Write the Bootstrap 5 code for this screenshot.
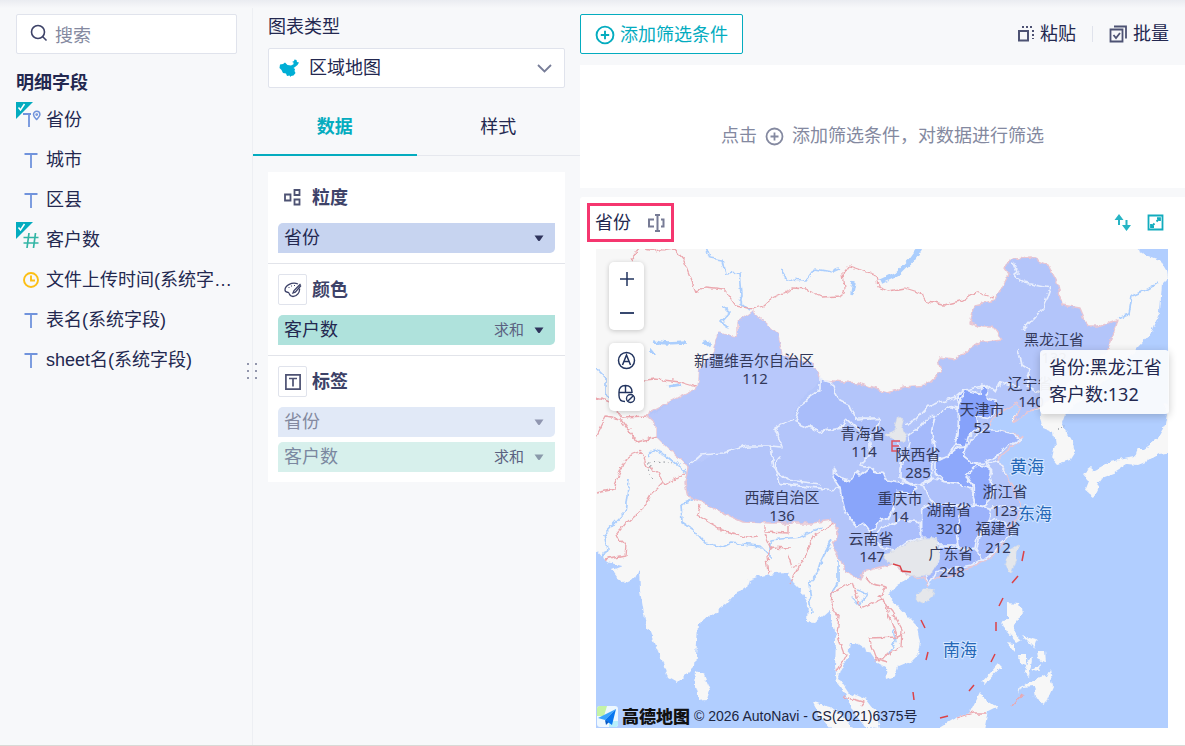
<!DOCTYPE html>
<html lang="zh-CN">
<head>
<meta charset="utf-8">
<meta name="viewport" content="width=device-width, initial-scale=1">
<title>区域地图</title>
<link href="https://cdn.jsdelivr.net/npm/bootstrap@5.3.0/dist/css/bootstrap.min.css" rel="stylesheet">
<style>
:root{--ink:#232850;--ink2:#3d4268;--mute:#8489a0;--teal:#04acbf;--line:#e0e3ec;--pane:#f7f8fa}
body{font-family:"Liberation Sans","Noto Sans CJK SC",sans-serif;font-size:18px;line-height:26px;color:var(--ink);background:var(--pane)}
button,select,input{font-family:inherit;color:inherit}
svg{display:block;flex:none}
.workbench{min-height:100vh;border-bottom:1px solid #d9d9d6}
.workbench::before{content:"";position:absolute;top:0;left:0;right:0;height:8px;background:linear-gradient(#eaecf1,#f7f8fa);z-index:2}
.fields-pane{width:253px;padding:14px 15px 14px 16px;border-right:1px solid #edeff3}
.config-pane{width:327px}
.search-box{height:40px;padding:0 13px;gap:5px;background:#fff;border:1px solid var(--line);border-radius:2px}
.search-box input{font-size:18px;border:0;outline:0;background:none;min-width:0}
.search-box input::placeholder{color:var(--mute);opacity:1}
.pane-title{font-size:18px;line-height:26px;font-weight:700;margin:16px 0 4px}
.field-row{height:40px;padding-left:6px;gap:6px}
.field-row svg{width:18px;height:18px}
.field-row .used{position:absolute;left:0;top:2px;width:17px;height:17px}
.field-row a{color:inherit;text-decoration:none;white-space:nowrap}
.grip{position:absolute;right:-6px;top:363px}
.kind-label{display:block;margin:14px 16px 8px 15px}
.kind{height:40px;margin:0 15px}
.kind select{font-size:18px;line-height:26px;height:40px;padding:0 40px;border:1px solid var(--line);border-radius:2px;background:#fff;color:var(--ink)}
.kind svg{position:absolute;top:8px;pointer-events:none}
.kind .chev{right:12px;top:12px}
.kind .region{left:10px}
.cfg-tabs{height:68px;border-bottom:1px solid #e6e8ee}
.cfg-tabs button{border:0;background:none;padding:12px 0 0;margin-bottom:-1px;border-bottom:2px solid transparent}
.cfg-tabs .active{font-weight:700;color:var(--teal);border-color:var(--teal)}
.shelves{margin:16px 15px;background:#fff}
.shelf{padding:10px}
.shelf+.shelf{border-top:1px solid #e2e4ea}
.shelf h3{font-size:18px;line-height:26px;font-weight:700;color:var(--ink2);height:31px;margin:0 0 10px;gap:5px}
.shelf-icon{width:29px;height:31px;border:1px solid transparent;border-radius:2px;background:#fff;padding:0}
.shelf-icon.boxed{border-color:var(--line)}
.pill{height:30px;border:0;border-radius:5px 0 5px 0;padding:0 11px 0 6px;gap:10px;width:100%}
.pill+.pill{margin-top:5px}
.pill small{font-size:15px;color:#5b6180}
.dim{background:#c7d4f0}.measure{background:#afe2dc}
.dim.faded{background:#e1e9f7;color:var(--mute)}
.measure.faded{background:#d7f0ec;color:#7b88a0}
.faded svg{opacity:.45}
.filter-bar{height:65px;padding:14px 16px 11px 0}
.add-filter{height:40px;padding:2px 14px 0;border:1px solid var(--teal);border-radius:2px;background:#fff;color:var(--teal);gap:5px}
.tool{border:0;background:none;padding:0;gap:5px}
.tool-rule{width:1px;height:16px;background:var(--line);margin:0 16px}
.filter-drop{height:123px;background:#fff;color:var(--mute);gap:8px;padding-top:19px;margin-bottom:9px}
.chart-card{background:#fff;border-radius:3px 0 0 0;padding:6px 17px 17px 7px}
.chart-name{height:39px;border:3px solid #f5366f;padding:0 5px;gap:16px}
.map-stage{margin:7px 0 0 9px;min-height:479px;background:#b1ceff}
.map-stage>svg{position:absolute;inset:0;width:100%;height:100%}
.map-stage text{font-family:"Noto Sans","Noto Sans CJK SC",sans-serif}
.prov{font-size:15px;fill:#33395a;text-anchor:middle}
.sea{font-size:17px;fill:#2468b8;text-anchor:middle;stroke:#d7e7ff;stroke-width:2px;paint-order:stroke}
.map-ctl{position:absolute;left:13px;width:35px;height:68px;background:#fff;border-radius:5px;box-shadow:0 1px 5px #0003}
.map-ctl button{display:flex;align-items:center;justify-content:center;border:0;background:none;padding:0;width:35px;height:34px}
.map-tip{position:absolute;right:-1px;top:101px;padding:4px 9px 5px;background:#fafbfdf2;border-radius:4px;box-shadow:0 2px 8px #0003;font-family:"Noto Sans","Noto Sans CJK SC",sans-serif;font-size:18px;line-height:27px;width:129px;height:64px;white-space:nowrap}
.map-credit{position:absolute;left:1px;bottom:0;font-size:14px;line-height:24px;gap:4px;color:#20263f}
.map-credit b{font-family:"Noto Sans CJK SC",sans-serif;font-size:17px;font-weight:900;line-height:24px;color:#111}
</style>
</head>
<body>
<svg width="0" height="0" class="position-absolute" aria-hidden="true">
<symbol id="i-text" viewBox="0 0 18 18"><path d="M2.500 3h13M9 3v14" fill="none" stroke="#7093dc" stroke-width="1.800"/></symbol>
<symbol id="i-used" viewBox="0 0 17 17"><path d="M0 0h17L0 17z" fill="#04acbf"/><path d="M2.500 5.500l2 2.500 4-6" fill="none" stroke="#fff" stroke-width="1.500"/></symbol>
<symbol id="i-caret" viewBox="0 0 10 7"><path d="M0.500.500h9L6 5.500q-1 1-2 0z" fill="#2f345c"/></symbol>
<symbol id="i-plus" viewBox="0 0 19 19"><circle cx="9.500" cy="9.500" r="8" fill="none" stroke="currentColor" stroke-width="1.800"/><path d="M9.500 5.500v8M5.500 9.500h8" stroke="currentColor" stroke-width="1.800"/></symbol>
</svg>
<div class="workbench d-flex position-relative">
<aside class="fields-pane position-relative flex-shrink-0">
  <label class="search-box d-flex align-items-center">
    <svg width="18" height="20" viewBox="0 0 18 20" fill="none" stroke="#3d4268" stroke-width="1.600"><circle cx="8" cy="8" r="6.500"/><path d="M12.500 12.500l4 4"/></svg>
    <input class="w-100 pt-1" type="search" placeholder="搜索" aria-label="搜索">
  </label>
  <h2 class="pane-title">明细字段</h2>
  <ul class="list-unstyled m-0">
    <li class="field-row d-flex align-items-center position-relative"><svg class="used"><use href="#i-used"/></svg><svg viewBox="0 0 18 18" overflow="visible" fill="none" stroke="#7093dc"><path d="M1 3h8M7 3v13" stroke-width="1.800"/><path d="M14.500 8.500C12 6 11.500 5 11.500 3.500a3.200 3.200 0 0 1 6.400 0C17.900 5 17 6 14.700 8.500z" stroke-width="1.500"/><circle cx="14.700" cy="3.600" r=".8" stroke-width="1.200"/></svg><a href="#">省份</a></li>
    <li class="field-row d-flex align-items-center"><svg><use href="#i-text"/></svg><a href="#">城市</a></li>
    <li class="field-row d-flex align-items-center"><svg><use href="#i-text"/></svg><a href="#">区县</a></li>
    <li class="field-row d-flex align-items-center position-relative"><svg class="used"><use href="#i-used"/></svg><svg viewBox="0 0 18 18" fill="none" stroke="#33b5a5" stroke-width="1.700"><path d="M1.500 6.500h15M1.500 12h15M7 2L5 17M13.500 2l-2 15"/></svg><a href="#">客户数</a></li>
    <li class="field-row d-flex align-items-center"><svg viewBox="0 0 18 18" fill="none" stroke="#fcbf15" stroke-width="1.900"><circle cx="9" cy="9" r="7"/><path d="M9 4.500V9.500h4"/></svg><a href="#" title="文件上传时间(系统字段)">文件上传时间(系统字…</a></li>
    <li class="field-row d-flex align-items-center"><svg><use href="#i-text"/></svg><a href="#">表名(系统字段)</a></li>
    <li class="field-row d-flex align-items-center"><svg><use href="#i-text"/></svg><a href="#">sheet名(系统字段)</a></li>
  </ul>
  <svg class="grip" width="12" height="17" fill="#9296ac"><path d="M1 0h2v2H1zM9 0h2v2H9zM1 7h2v2H1zM9 7h2v2H9zM1 14h2v2H1zM9 14h2v2H9z"/></svg>
</aside>

<section class="config-pane flex-shrink-0">
  <label class="kind-label" for="kind">图表类型</label>
  <div class="kind position-relative">
    <select id="kind" class="form-select"><option>区域地图</option></select>
    <svg class="region" width="22" height="24" viewBox="0 0 22 24"><path d="M2 8.500L5 8l2-1.500L9.500 9l3.500.500 2.500-1.300V6.500L14 6l2-1 .5-1.500L18.500 4l.5 2 2 .5L19.500 9l-2.500 2-1.500 1 1.500 1-.5 2 1 2-2 2.500-2.500.500-.500 1-1-1.500-2.500.500L8 17.500l-3-.500L3.500 14 1.500 12z" fill="#00aed5"/></svg>
    <svg class="chev" width="17" height="17" fill="none" stroke="#777d98" stroke-width="1.800"><path d="M2 5l6.500 6.500L15 5"/></svg>
  </div>
  <div class="cfg-tabs d-flex" role="tablist">
    <button class="w-50 active" type="button" role="tab" aria-selected="true">数据</button>
    <button class="w-50" type="button" role="tab" aria-selected="false">样式</button>
  </div>
  <div class="shelves">
    <div class="shelf">
      <h3 class="d-flex align-items-center"><span class="shelf-icon d-flex align-items-center justify-content-center"><svg width="17" height="17" fill="none" stroke="#4d5273" stroke-width="1.800"><path d="M1 5.500h5.500v6H1zM10.500 1h5v5h-5zM10.500 10.500h5v5h-5z"/></svg></span>粒度</h3>
      <button class="pill dim d-flex align-items-center" type="button"><span class="me-auto">省份</span><svg width="10" height="7"><use href="#i-caret"/></svg></button>
    </div>
    <div class="shelf">
      <h3 class="d-flex align-items-center"><button class="shelf-icon boxed d-flex align-items-center justify-content-center" type="button" aria-label="颜色设置"><svg width="18" height="16" viewBox="0 0 18 16" fill="none" stroke="#3d4268" stroke-width="1.300"><path d="M14 2C8-.5 1 3.500 1 8c0 2.500 2.500 2 3.500 2.500S5 14.500 9 14.500s7-4.500 6.500-8"/><path d="M16.500 2L10 8.500l-1 2.500 2.300-.800L17 3.500"/><path d="M4.500 5.500h1M7 4h1M10 3.500h1" stroke-width="1.200"/></svg></button>颜色</h3>
      <button class="pill measure d-flex align-items-center" type="button"><span class="me-auto">客户数</span><small>求和</small><svg width="10" height="7"><use href="#i-caret"/></svg></button>
    </div>
    <div class="shelf">
      <h3 class="d-flex align-items-center"><button class="shelf-icon boxed d-flex align-items-center justify-content-center" type="button" aria-label="标签设置"><svg width="16" height="16" fill="none" stroke="#4d5273" stroke-width="1.700"><path d="M.900.900h14.200v14.200H.900zM4 4.500h8M8 4.500V12.500"/></svg></button>标签</h3>
      <button class="pill dim faded d-flex align-items-center" type="button"><span class="me-auto">省份</span><svg width="10" height="7"><use href="#i-caret"/></svg></button>
      <button class="pill measure faded d-flex align-items-center" type="button"><span class="me-auto">客户数</span><small>求和</small><svg width="10" height="7"><use href="#i-caret"/></svg></button>
    </div>
  </div>
</section>

<main class="flex-grow-1 d-flex flex-column">
  <div class="filter-bar d-flex align-items-center">
    <button class="add-filter d-flex align-items-center me-auto" type="button"><svg width="20" height="20"><use href="#i-plus"/></svg>添加筛选条件</button>
    <button class="tool d-flex align-items-center" type="button"><svg width="18" height="18" fill="none" stroke="#4d5273" stroke-width="2"><path d="M2 6h9v9.500H2z"/><path d="M5 2h12M16 5v9" stroke-dasharray="2 2"/></svg>粘贴</button>
    <span class="tool-rule"></span>
    <button class="tool d-flex align-items-center" type="button"><svg width="19" height="18" fill="none" stroke="#4d5273" stroke-width="1.800"><path d="M1.500 4.500h12v12h-12zM5 1.500h12v12"/><path d="M4.500 10l2.500 3 4-5"/></svg>批量</button>
  </div>
  <div class="filter-drop d-flex align-items-center justify-content-center"><span>点击</span><svg width="19" height="19"><use href="#i-plus"/></svg><span>添加筛选条件，对数据进行筛选</span></div>

  <section class="chart-card flex-grow-1 d-flex flex-column">
    <div class="d-flex align-items-center">
      <div class="chart-name d-flex align-items-center me-auto"><span>省份</span><svg width="19" height="18" fill="none" stroke="#777b95" stroke-width="2"><path d="M7 5.500H2v7h5M14 5.500h2.500v7H14M10.500 1v16M8 1h5M8 17h5"/></svg></div>
      <button class="tool me-3" type="button" aria-label="排序"><svg width="17" height="18" fill="#27b4c4"><path d="M5 0l4.500 6H6v5H4V6H.500zM12.500 17L8 11h3.500V6h2v5H17z"/></svg></button>
      <button class="tool me-1" type="button" aria-label="放大"><svg width="17" height="17" fill="none" stroke="#12acbe" stroke-width="1.800"><path d="M1.500 1.500h14v14h-14zM9.500 7.500l3-3M10 4.200h3V7M7.500 9.500l-3 3M4 10v3h3"/></svg></button>
    </div>
    <div class="map-stage position-relative flex-grow-1">
      <svg viewBox="596 249 572 479" preserveAspectRatio="xMidYMid slice" role="img" aria-label="客户数区域地图">
        <defs><filter id="coast" x="0" y="0" width="100%" height="100%"><feTurbulence type="fractalNoise" baseFrequency=".13" numOctaves="3" seed="4"/><feDisplacementMap in="SourceGraphic" scale="6" xChannelSelector="R" yChannelSelector="G"/></filter></defs>
        <rect x="590" y="240" width="590" height="500" fill="#b1ceff"/>
        <g filter="url(#coast)" stroke-linejoin="round">
          <path fill="none" d="M580 230h610v510H580z"/>
          <!-- mainland and islands -->
          <g fill="#f7f7f7">
          <path d="M585 235H1130L1136 249 1145 255 1160 260 1166 270 1167 278 1162 283 1160 312 1152 332 1137 348 1115 372 1095 390 1075 405 1065 415 1062 423 1067 432 1073 442 1075 452 1070 460 1057 464 1052 458 1055 445 1053 432 1043 428 1040 410 1027 413 1013 423 1013 418 1020 409 1017 403 1003 411 990 422 987 430 995 435 1003 432 1023 437 1013 446 1002 455 998 461 1007 475 1012 485 1017 497 1022 507 1017 517 1010 530 1002 547 990 558 970 567 950 577 930 578 927 587 924 578 912 577 897 585 888 595 897 605 908 617 918 627 921 642 919 653 910 662 898 667 895 677 887 680 886 668 877 663 868 650 857 643 850 643 848 657 840 670 838 677 848 692 867 700 877 713 881 729 866 728 852 710 845 693 837 683 835 667 836 640 832 620 830 610 815 623 807 622 808 603 800 590 790 580 787 572 775 573 757 577 749 580 747 588 737 592 727 603 712 615 698 625 697 643 695 665 687 673 677 683 668 678 662 660 653 640 645 620 640 590 639 570 635 578 625 583 617 577 612 570 622 566 607 562 596 550 585 545Z"/>
          <path d="M696 671l8 4 6 15-3 9-8 1-4-13zM813 703l17 4 17 13 6 10h-20l-13-14zM935 730l20-12 15-5 10-20 7 7 10 7-8 4-4 20zM1007 602l13 1 2 10-7 11-1 9 7 6-5 3-9-10-5-12 5-1zM1020 687l12-6 14-5 4-8 3 18-8 18-10-7-2-11-11 1-4 8zM1018 655h8v10l-7-3zM1027 662l5-3-3 18-5-4zM1037 650h8l1 13-8-4zM982 682l17-19 3 3-17 18zM1007 643l7 1v8zM1022 636l15 4-3 8zM1032 670l8-6-2 8z"/>
          <path d="M1162 405l14-6v53l-17 2-12 7-10 4-10-1-14 9-8 1-6 8-10-4 6-8 15-8 14-3 10-2 3-8h6l14-10 8-14 2-12zM1082 473l8-6 9 8-2 14-4 8-8-6 4-10zM1101 472l12-5 2 6-13 5z"/>
          </g>
          <!-- rivers and lakes -->
          <g fill="none" stroke="#abcefd" stroke-width="1.700">
          <path d="M706 247l4 11 12 2 3 14 15-1 2 22-3 6 10 9M722 306l8 6-9 10 8 6M781 270l6 9 20 1 8-11 17 3 7-3M630 378l6 8M596 368l9 9v17l14 11M681 504l13-5M681 504l1 18 12 8 11 13 18 4 8-4 29 3 8 8M629 480l-4 32-21 22 3 15-5 9M648 457l6-7 11 4 12 10 13 12M770 560v-20l31-3 20-10M832 540l-10 20-4 13-9 10 3 30M838 560v22l-7 14M856 590l10 3-6 12-8-8M893 630l3 10-7 13M1118 318l11-4 3-18 16-7 10-6"/>
          <path d="M920 248l-8 11-15 15-17 8" stroke-width="5"/><path d="M653 341l13 2 20-1M650 349l5 6M668 387l12-2M854 282l-2 11M704 341l7 6" stroke-width="3.500"/>
          </g>
          <!-- national borders -->
          <g fill="none" stroke="#eba7ae" stroke-width="1.300">
          <path d="M631 259l9-11 15 3 18-3 11 13 12 31 10-5 18 2 12 17 17 3 10-3 10-8 20-9 13 1 15 7 20-1 4-8-2-14 6-8 27 9 2 12 10 4 17-3 16 5 6 9 17 3 20-5 12-8 17 6M645 380l10-1 25 3 17 5M596 398l15 4 10 15 30-1M596 437l10-20 15 3 16 22 21-5M614 485l12-28 16-6M640 450q5 10 7 17l10 5 8 13 10-6 10-6M596 493l19-4 1-9M663 482l-12 12-8 14-17 15-10 12 10 10-1 11-20 4M700 504l-3 11 25 15 26 7 12-1M764 525v7l25 1v-8M764 534l7 15-4 8 2 17M770 547l20 1M788 555l4 12 6-2M790 583l13-23 12-25 20-13M832 594l-1 10 8 13-2 16 8 22-9 17M832 594l19-12M852 582l9 27 22-10 11 28 4 10-29 1 8 21 11 3M866 577l6 7 15 3-8 10 13 15 10 18-1 17-26 14M898 637l8-4M844 697l20 5-3 4M957 718l16-5h14M1012 707l10-12"/>
          </g>
          <g fill="none" stroke="#8a8f96" stroke-dasharray="1.500 3"><path d="M649 463l14-1 10 1M650 466l-2 8 6 6M1056 428l12-3"/></g>
          <!-- provinces with data -->
          <path fill="#b3c5fa" stroke="#e9c6d2" stroke-width="1.400" d="M648 417L650 412 677 398 698 388 700 368 713 353 718 333 738 337 738 322 752 312 767 325 778 335 782 355 793 358 813 365 820 380 858 383 887 393 905 387 927 385 941 372 938 358 953 360 965 353 980 342 987 342 1002 340 993 327 983 327 970 323 975 305 995 300 1008 275 1003 268 1013 258 1030 257 1048 265 1057 282 1062 305 1080 308 1088 327 1098 327 1117 320 1112 338 1107 352 1085 365 1060 390 1040 408 1027 413 1013 423 1020 409 1017 403 1003 411 990 422 987 430 995 435 1003 432 1023 437 1013 446 1002 455 998 461 1007 475 1012 485 1017 497 1022 507 1017 517 1010 530 1002 547 990 558 970 567 950 577 930 578 927 587 924 578 912 577 903 572 893 564 877 568 863 572 860 580 845 572 840 558 832 548 839 533 832 520 813 523 770 523 743 522 720 512 703 502 688 497 685 483 688 467 670 450 657 437 657 425Z"/>
          <path fill="#b8c8fb" d="M649 416L678 398 698 388 700 368 713 353 718 333 738 337 738 322 752 312 767 325 778 335 782 355 813 365 820 382 800 400 793 418 775 427 780 447 735 447 690 465 670 450 657 437 657 425Z"/>
          <g stroke="#e8eefd" stroke-width="5" transform="translate(820 375) scale(.3333)">
          <path fill="#a9bdfa" d="M0 10L30 20 60 75 90 90 110 135 180 130 170 165 145 190 80 130 60 160 0 170-75 140-60 90 0 45Z"/>
          <path fill="#89a5fa" d="M40 280L60 310 90 320 110 290 120 300 150 275 165 290 190 292 200 315 265 325 290 340 270 355 230 352 220 400 205 430 180 435 165 460 150 470 130 445 110 455 90 430 75 410 65 370 60 340 40 310Z"/>
          <path fill="#86a2fa" d="M415 60L435 45 480 55 485 30 505 40 505 70 525 75 525 120 500 130 470 125 475 160 445 185 435 215 405 210 415 150Z"/>
          <path fill="#a7bcfb" d="M345 125L390 95 415 100 415 150 405 210 380 250 340 250 335 170Z"/>
          <path fill="#a5bafb" d="M325 125L345 125 335 170 345 230 335 270 335 310 300 330 265 325 240 310 240 280 260 250 270 200 265 180 300 155Z"/>
          <path fill="#8da8fb" d="M345 262L380 245 410 220 440 215 430 245 455 265 470 270 440 300 455 330 450 350 410 325 375 320 345 290Z"/>
          <path fill="#9fb6fc" d="M440 215L450 195 490 165 525 165 560 175 605 190 560 215 530 245 490 265 455 265 430 245Z"/>
          <path fill="#8ea9fb" d="M470 270L500 275 515 285 510 310 520 340 510 375 490 395 470 390 460 370 460 330 440 300Z"/>
          <path fill="#aec1fb" d="M340 310L375 320 410 325 455 345 465 390 430 395 390 390 340 385 320 360 310 330Z"/>
          <path fill="#98b0fb" d="M305 400L340 385 420 395 420 430 410 480 415 510 360 510 340 490 305 490Z"/>
          <path fill="#9bb2fb" d="M420 400L465 390 515 400 505 440 470 490 465 520 415 520 410 480Z"/>
          <path fill="#a7bcfc" d="M505 440L530 430 560 450 575 475 545 500 520 535 490 555 470 525 480 480Z"/>
          <path fill="#aabefb" d="M180 460L210 450 240 435 300 440 305 490 260 500 220 530 190 520 165 490Z"/>
          <path fill="#a5bafb" d="M360 515L415 520 465 525 490 550 455 570 400 580 350 590 325 630 315 600 355 560Z"/>
          <g fill="#e5e7eb" stroke="#d8dce5" stroke-width="2"><path d="M220 530L260 505 310 490 350 490 355 520 360 550 330 600 275 605 240 580 200 560 190 540Z"/><path d="M200 180L225 165 235 125 250 135 245 155 260 180 250 200 225 195Z"/><path d="M570 525L593 513 590 555 572 596 555 565Z"/><path d="M310 645L340 645 335 665 310 685 288 674 290 660Z"/></g>
          <path fill="none" d="M145 190L150 240 120 270 150 275M0 340L35 345 60 340M0 340L-120 325-135 265-120 245M235 200L245 250 240 290M620 405L575 400 540 390 515 400M515 285L500 265 535 260 560 300"/>
          </g>
          <g fill="none" stroke="#e8eefd" stroke-width="1.700"><path d="M690 465l11-10 22-2 24-7h23l3 22 14 12 34 4M770 446l12 1-7-19 18-9M1013 262l4 10-4 3 12 8 25 5-7 20-20 22M1018 348l4 17 8 5-4 15 14 8M958 404l8-14 21-5 8 7 5-10 20 5M875 418l-20 0M905 425l10-5 13-14 30-9"/></g>
        </g>
        <path fill="none" stroke="#dc4247" stroke-width="1.500" d="M893 564l7 2 2 5 9 1M1024 551l-2 10M1018 576l-6 7M1003 598l-4 8M996 622v9M995 654l-4 8M974 685l-5 6M940 718l8-2M913 692l1 8M928 652l-2 8M921 620l4 8"/>
        <path d="M900 441h-8v10h7M892 446h7" fill="none" stroke="#df5360" stroke-width="1.500"/>
        <g class="prov">
        <text x="754" y="366">新疆维吾尔自治区</text><text x="755" y="384">112</text>
        <text x="1054" y="345">黑龙江省</text><text x="1054" y="363">132</text>
        <text x="1030" y="389">辽宁省</text><text x="1031" y="407">140</text>
        <text x="982" y="415">天津市</text><text x="982" y="433">52</text>
        <text x="863" y="439">青海省</text><text x="864" y="457">114</text>
        <text x="918" y="460">陕西省</text><text x="918" y="478">285</text>
        <text x="782" y="503">西藏自治区</text><text x="782" y="521">136</text>
        <text x="900" y="504">重庆市</text><text x="900" y="522">14</text>
        <text x="1005" y="497">浙江省</text><text x="1005" y="516">123</text>
        <text x="949" y="515">湖南省</text><text x="949" y="534">320</text>
        <text x="998" y="534">福建省</text><text x="998" y="553">212</text>
        <text x="871" y="544">云南省</text><text x="872" y="562">147</text>
        <text x="951" y="559">广东省</text><text x="952" y="577">248</text>
        </g>
        <g class="sea"><text x="1027" y="473">黄海</text><text x="1035" y="520">东海</text><text x="960" y="656">南海</text></g>
      </svg>
      <div class="map-ctl" style="top:13px"><button type="button" aria-label="放大地图"><svg width="16" height="16" stroke="#22345f" stroke-width="1.500"><path d="M8 1v14M1 8h14"/></svg></button><button type="button" aria-label="缩小地图"><svg width="16" height="16" stroke="#22345f" stroke-width="1.800"><path d="M1 8h14"/></svg></button></div>
      <div class="map-ctl" style="top:94px"><button type="button" aria-label="标注"><svg width="19" height="19" fill="none" stroke="#22345f" stroke-width="1.500"><circle cx="9.500" cy="9.500" r="8"/><path d="M5.500 14l4-10 4 10M7 10.500h5"/></svg></button><button type="button" aria-label="锁定缩放"><svg width="19" height="20" fill="none" stroke="#22345f" stroke-width="1.400"><path d="M8 17.500c-4 0-6-2-6-6V8c0-4 2-6.500 6.500-6.500S15 4 15 8v1M2 8.500h13M8.500 1.500v7"/><circle cx="13.500" cy="14.500" r="4"/><path d="M10.700 17.300l5.600-5.600"/></svg></button></div>
      <div class="map-tip">省份:黑龙江省<br>客户数:132</div>
      <div class="map-credit d-flex align-items-center"><svg width="21" height="21" viewBox="0 0 21 21"><rect width="21" height="21" rx="3" fill="#eef8ff"/><path d="M0 3q0-3 3-3h7L7 10H0z" fill="#c5f3a6"/><path d="M12 15h9v3q0 3-3 3h-6z" fill="#b7eefb"/><path d="M19 3L1 12l7 2z" fill="#39a5ff"/><path d="M19 3L8 14l7 5z" fill="#0876ef"/><path d="M8 14l1 5 3-3z" fill="#075bc5"/></svg><b>高德地图</b><span>© 2026 AutoNavi - GS(2021)6375号</span></div>
    </div>
  </section>
</main>
</div>
<script src="https://cdn.jsdelivr.net/npm/bootstrap@5.3.0/dist/js/bootstrap.bundle.min.js"></script>
</body>
</html>
